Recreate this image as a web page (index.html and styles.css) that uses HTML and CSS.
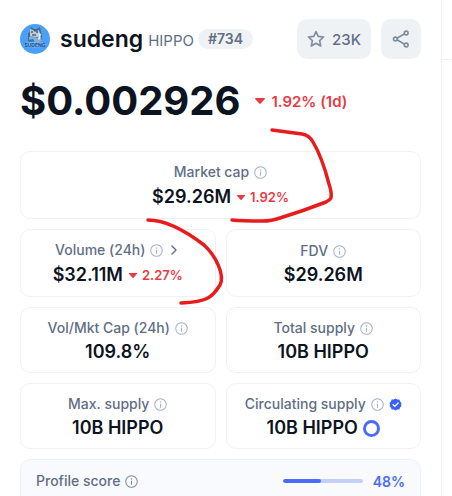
FILE: index.html
```html
<!DOCTYPE html>
<html lang="en">
<head>
  <meta charset="UTF-8" />
  <meta name="viewport" content="width=device-width, initial-scale=1" />
  <title>sudeng HIPPO</title>
  <link rel="stylesheet" href="styles.css">
</head>
<body>
  <!-- shared icons -->
  <svg class="sprite" aria-hidden="true">
    <symbol id="info" viewBox="0 0 14 14">
      <circle cx="7" cy="7" r="6.2" fill="none" stroke="currentColor" stroke-width="1.1" />
      <path d="M7 6.2v4.200" stroke="currentColor" stroke-width="1.2" />
      <circle cx="7" cy="4.2" r="0.8" fill="currentColor" />
    </symbol>
    <symbol id="caret" viewBox="0 0 12 8">
      <path d="M1.6 1h8.8q1 .2.4 1L6.7 6.6q-.7.7-1.4 0L1.2 2q-.6-.8.4-1z" fill="currentColor" />
    </symbol>
  </svg>

  <div class="page">
    <main class="coin-panel">
      <header class="coin-header">
        <svg class="coin-logo" viewBox="0 0 30 30" role="img" aria-label="sudeng logo">
          <circle cx="15" cy="15" r="15" fill="#4a9ff8" />
          <path d="M8 17V10l2-3 1-4 3 2h3l3-2 1 5 1 4v5l-6 2z" fill="#4b6680" />
          <path d="M10 5l3 1 2 2 4-2 1 4-2 3-5 1-3-2z" fill="#b5cddd" />
          <path d="M9 13l4-1 3 2 5-1 1 4-6 2-7-1z" fill="#86aecb" />
          <path d="M11 8h2M16 8h2M12 11h4" stroke="#203247" stroke-width="1" />
          <path d="M8 16l5-1 2 3-5 1z" fill="#1e7ec4" />
          <path d="M19 9l2 1-1 5-2 1z" fill="#e1edf3" />
          <path d="M5 19q10-3 20 0l1 3q-11 3-22 0z" fill="#76b8f2" />
          <text class="logo-text" x="15" y="23" text-anchor="middle">SUDENG</text>
        </svg>
        <h1 class="coin-name">sudeng</h1>
        <span class="coin-symbol">HIPPO</span>
        <span class="coin-rank">#734</span>
        <div class="coin-actions">
          <button class="action-btn watch-btn" type="button">
            <svg width="18" height="18" viewBox="0 0 18 18" aria-hidden="true">
              <path d="M9 1.5l2.2 4.9 5.400.600-4 3.600 1.100 5.400L9 13.300 4.300 16l1.100-5.400-4-3.600 5.400-.600z" fill="none" stroke="currentColor" stroke-width="1.6" stroke-linejoin="round" />
            </svg>
            <span>23K</span>
          </button>
          <button class="action-btn" type="button" aria-label="Share">
            <svg width="18" height="18" viewBox="0 0 18 18" fill="none" stroke="currentColor" stroke-width="1.6" aria-hidden="true">
              <path d="M5 8.2l7.6-4.4M5 9.8l7.6 4.4" />
              <circle cx="3.4" cy="9" r="1.9" />
              <circle cx="14.2" cy="3" r="1.9" />
              <circle cx="14.2" cy="15" r="1.9" />
            </svg>
          </button>
        </div>
      </header>

      <div class="price-row">
        <span class="price">$0.002926</span>
        <span class="change change-lg"><svg class="caret" aria-hidden="true"><use href="#caret" /></svg>1.92% (1d)</span>
      </div>

      <dl class="stats">
        <div class="card card-wide">
          <dt class="label">Market cap <svg class="info"><use href="#info" /></svg></dt>
          <dd class="value value-change">$29.26M <span class="change"><svg class="caret"><use href="#caret" /></svg>1.92%</span></dd>
        </div>
        <div class="card">
          <dt class="label">Volume (24h) <svg class="info"><use href="#info" /></svg>
            <svg class="chevron" viewBox="0 0 12 12"><path d="M4 2l4 4-4 4" fill="none" stroke="currentColor" stroke-width="1.4" stroke-linecap="round" stroke-linejoin="round" /></svg>
          </dt>
          <dd class="value value-change">$32.11M <span class="change"><svg class="caret"><use href="#caret" /></svg>2.27%</span></dd>
        </div>
        <div class="card">
          <dt class="label">FDV <svg class="info"><use href="#info" /></svg></dt>
          <dd class="value">$29.26M</dd>
        </div>
        <div class="card">
          <dt class="label">Vol/Mkt Cap (24h) <svg class="info"><use href="#info" /></svg></dt>
          <dd class="value">109.8%</dd>
        </div>
        <div class="card">
          <dt class="label">Total supply <svg class="info"><use href="#info" /></svg></dt>
          <dd class="value">10B HIPPO</dd>
        </div>
        <div class="card">
          <dt class="label">Max. supply <svg class="info"><use href="#info" /></svg></dt>
          <dd class="value">10B HIPPO</dd>
        </div>
        <div class="card">
          <dt class="label">Circulating supply <svg class="info"><use href="#info" /></svg>
            <svg class="verified" viewBox="0 0 14 14">
              <path d="M7 .5l1.900 1 2.200.2.900 2 1.400 1.600-.4 1.700.4 1.700-1.400 1.600-.9 2-2.200.2-1.900 1-1.900-1-2.200-.2-.9-2L.6 8.700 1 7 .6 5.300 2 3.700l.9-2 2.200-.2z" fill="#3861fb" />
              <path d="M4.4 7.2l1.9 1.8 3.5-3.7" fill="none" stroke="#fff" stroke-width="1.5" stroke-linecap="round" stroke-linejoin="round" />
            </svg>
          </dt>
          <dd class="value">10B HIPPO <span class="supply-ring"></span></dd>
        </div>
      </dl>

      <section class="profile">
        <span class="profile-label">Profile score <svg class="info"><use href="#info" /></svg></span>
        <div class="bar" role="img" aria-label="Profile score"><div class="bar-fill" style="width: 48%"></div></div>
        <span class="percent">48%</span>
      </section>
    </main>
    <aside class="side"><div class="side-top"></div></aside>

    <!-- pen marks over the cards -->
    <svg class="marks" width="452" height="496" viewBox="0 0 452 496" aria-hidden="true">
      <path d="M272 130L302 134Q309 135 313 142Q322 157 329 184Q332 193 331 198Q330 200 326 202Q303 211 280 218Q272 221 262 221Q242 221 232 220" />
      <path d="M148 220C166 220 187 232 204 245C216 256 225 275 220 285C213 296 209 302 181 303" />
    </svg>
  </div>
</body>
</html>
```
FILE: styles.css
```css
* {
  box-sizing: border-box;
}
body {
  margin: 0;
  font-family: Inter, "Liberation Sans", sans-serif;
  background-color: #fff;
  color: #0d1421;
}
.sprite {
  display: none;
}
svg {
  flex-shrink: 0;
}
.page {
  position: relative;
  display: flex;
  height: 100vh;
  overflow: hidden;
}
.coin-panel {
  flex: 1;
  min-width: 0;
  padding: 19px 20px 0;
}
.side {
  width: 11px;
  border-left: 1px solid #eff2f5;
}
.side-top {
  height: 60px;
  border-bottom: 1px solid #eff2f5;
}

/* header */
.coin-header {
  display: flex;
  align-items: center;
  height: 40px;
}
.coin-logo {
  width: 30px;
  height: 30px;
  margin-right: 10px;
}
.logo-text {
  font-size: 5px;
  font-weight: 700;
  fill: #244b8c;
}
.coin-name {
  margin: 0 5px 0 0;
  font-size: 23px;
  font-weight: 600;
  line-height: 32px;
}
.coin-symbol {
  margin-right: 4px;
  padding-top: 4px;
  font-size: 15px;
  line-height: 20px;
  color: #616e85;
}
.coin-rank {
  padding: 0 10px;
  border-radius: 10px;
  background-color: #eff2f5;
  font-size: 14px;
  font-weight: 600;
  line-height: 20px;
  color: #616e85;
}
.coin-actions {
  display: flex;
  gap: 10px;
  margin-left: auto;
}
.action-btn {
  display: flex;
  align-items: center;
  justify-content: center;
  gap: 7px;
  min-width: 40px;
  height: 40px;
  padding: 0 10px;
  border: none;
  border-radius: 10px;
  background-color: #eff2f5;
  font-family: inherit;
  font-size: 15px;
  font-weight: 500;
  color: #616e85;
  cursor: pointer;
}
.action-btn svg {
  color: #808a9d;
}

/* price */
.price-row {
  display: flex;
  align-items: center;
  gap: 14px;
  height: 48px;
  margin: 18px 0 26px;
}
.price {
  font-size: 40px;
  font-weight: 700;
  line-height: 48px;
}
.change {
  display: flex;
  align-items: center;
  gap: 4px;
  font-size: 13px;
  font-weight: 600;
  color: #ea3943;
}
.change .caret {
  width: 10px;
  height: 7px;
}
.change-lg {
  gap: 5px;
  font-size: 15px;
}
.change-lg .caret {
  width: 12px;
  height: 8px;
}

/* stats */
.stats {
  display: grid;
  grid-template-columns: 1fr 1fr;
  gap: 10px;
  margin: 0 0 10px;
}
.card {
  display: flex;
  flex-direction: column;
  align-items: center;
  justify-content: center;
  gap: 2px;
  padding: 10px 8px 8px;
  border: 1px solid #eff2f5;
  border-radius: 10px;
}
.card-wide {
  grid-column: 1 / -1;
}
.label,
.profile-label {
  display: flex;
  align-items: center;
  gap: 5px;
  font-size: 14px;
  font-weight: 500;
  line-height: 20px;
  white-space: nowrap;
  color: #616e85;
}
.info {
  width: 13px;
  height: 13px;
  color: #a6b0c3;
}
.chevron {
  width: 12px;
  height: 12px;
}
.verified {
  width: 13px;
  height: 13px;
}
.value {
  display: flex;
  align-items: center;
  gap: 5px;
  margin: 0;
  font-size: 18px;
  font-weight: 600;
  line-height: 24px;
  white-space: nowrap;
}
.value-change {
  line-height: 26px;
}
.supply-ring {
  width: 17px;
  height: 17px;
  border: 3px solid #4a6cf8;
  border-radius: 50%;
}

/* profile score */
.profile {
  display: flex;
  align-items: center;
  height: 44px;
  padding: 0 15px;
  border: 1px solid #eff2f5;
  border-radius: 10px;
  background-color: #f8fafd;
}
.profile .info {
  color: #808a9d;
}
.bar {
  width: 80px;
  height: 4px;
  margin: 0 10px 0 auto;
  border-radius: 2px;
  background-color: #c3d0fd;
  overflow: hidden;
}
.bar-fill {
  height: 100%;
  border-radius: 2px;
  background-color: #4a6cf8;
}
.percent {
  font-size: 14px;
  font-weight: 600;
  color: #4a6cf8;
}

.marks {
  position: absolute;
  top: 0;
  left: 0;
  fill: none;
  stroke: #e81c1c;
  stroke-width: 3.5;
  stroke-linecap: round;
  stroke-linejoin: round;
  pointer-events: none;
}
```
